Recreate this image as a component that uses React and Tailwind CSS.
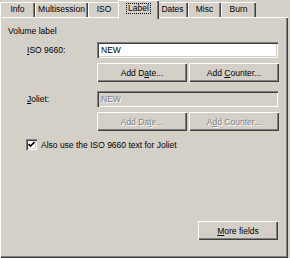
import React from "react";

const raised =
  "shadow-[inset_1px_1px_0_#ffffff,inset_-1px_-1px_0_#404040,inset_-2px_-2px_0_#808080]";
const sunken =
  "shadow-[inset_1px_1px_0_#808080,inset_2px_2px_0_#404040,inset_-1px_-1px_0_#ffffff,inset_-2px_-2px_0_#d4d0c8]";
const tabSh =
  "shadow-[inset_1px_1px_0_#ffffff,inset_-1px_0_0_#404040,inset_-2px_0_0_#808080]";
const dis = "text-[#808080] [text-shadow:1px_1px_0_#ffffff]";

function Tab({ w, children }) {
  return (
    <div
      className={`h-[15px] ${w} ${tabSh} flex items-center justify-center leading-[10px] pb-[1px]`}
    >
      <span>{children}</span>
    </div>
  );
}

function Btn({ w, disabled, children }) {
  return (
    <div
      className={`${w} h-[19px] ${raised} flex items-center justify-center leading-[10px] ${
        disabled ? dis : ""
      }`}
    >
      <span className="whitespace-pre">{children}</span>
    </div>
  );
}

export default function App() {
  return (
    <div className="w-[290px] h-[258px] bg-[#d4d0c8] flex flex-col text-[8.5px] text-black font-['Liberation_Sans',Arial,sans-serif] overflow-hidden">
      <div className="flex items-end h-[17px] relative z-10">
        <Tab w="w-[35px]">Info</Tab>
        <Tab w="w-[53px]">Multisession</Tab>
        <Tab w="w-[32px]">ISO</Tab>
        <div
          className={`relative z-20 h-[19px] w-[41px] -mx-[2px] -mb-[2px] bg-[#d4d0c8] ${tabSh} flex items-start justify-center pt-[3px]`}
        >
          <span className="border border-dotted border-black px-[1px] leading-[9px]">
            Label
          </span>
        </div>
        <Tab w="w-[31px]">Dates</Tab>
        <Tab w="w-[33px]">Misc</Tab>
        <Tab w="w-[35px]">Burn</Tab>
      </div>
      <div
        className={`w-[288px] h-[241px] ${raised} flex flex-col pt-[9px] pl-[8px] pb-[18px] leading-[10px]`}
      >
        <div className="h-[10px]">Volume label</div>

        <div className="flex items-center mt-[6px]">
          <div className="ml-[19px] w-[70px]">
            <span>
              <u>I</u>SO 9660:
            </span>
          </div>
          <div
            className={`w-[181px] h-[16px] bg-white ${sunken} flex items-center pl-[4px]`}
          >
            NEW
          </div>
        </div>

        <div className="flex gap-[2px] ml-[89px] mt-[5px]">
          <Btn w="w-[90px]">
            {"Add D"}
            <u>a</u>
            {"te..."}
          </Btn>
          <Btn w="w-[90px]">
            {"Add "}
            <u>C</u>
            {"ounter..."}
          </Btn>
        </div>

        <div className="flex items-center mt-[9px]">
          <div className="ml-[19px] w-[70px]">
            <span>
              <u>J</u>oliet:
            </span>
          </div>
          <div
            className={`w-[181px] h-[16px] bg-[#d4d0c8] ${sunken} flex items-center pl-[4px] ${dis}`}
          >
            NEW
          </div>
        </div>

        <div className="flex gap-[2px] ml-[89px] mt-[5px]">
          <Btn w="w-[90px]" disabled>
            {"Add Da"}
            <u>t</u>
            {"e..."}
          </Btn>
          <Btn w="w-[90px]" disabled>
            {"A"}
            <u>d</u>
            {"d Counter..."}
          </Btn>
        </div>

        <div className="flex items-center mt-[8px] ml-[18px]">
          <div
            className={`w-[11px] h-[11px] bg-white ${sunken} flex items-center justify-center`}
          >
            <svg width="7" height="7" viewBox="0 0 7 7">
              <path
                d="M0.5 3 L2.5 5 L6.5 1"
                fill="none"
                stroke="#000"
                strokeWidth="1.6"
              />
            </svg>
          </div>
          <div className="ml-[4px]">Also use the ISO 9660 text for Joliet</div>
        </div>

        <div className="mt-auto self-end mr-[10px]">
          <Btn w="w-[80px]">
            <u>M</u>
            {"ore fields"}
          </Btn>
        </div>
      </div>
    </div>
  );
}
